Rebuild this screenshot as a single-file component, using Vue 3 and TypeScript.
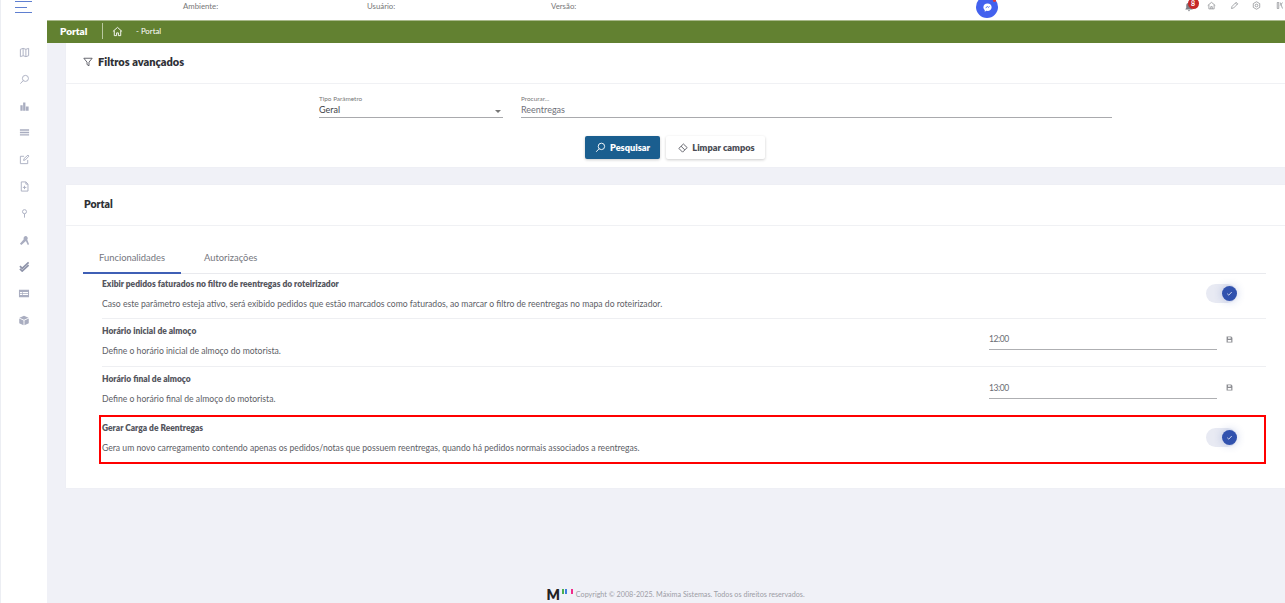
<script setup lang="ts">
const topLabels = ['Ambiente:', 'Usuário:', 'Versão:']
</script>

<template>
  <div class="shell">
    <aside class="side">
      <div class="burger"><i></i><i class="short"></i><i></i></div>
      <nav class="side-icons">
        <svg viewBox="0 0 12 12"><path d="M1.500 2.500 4.500 1.500 7.500 2.500 10.500 1.500V9.500L7.500 10.500 4.500 9.500 1.500 10.500ZM4.500 1.500V9.500M7.500 2.500V10.500" /></svg>
        <svg viewBox="0 0 12 12"><circle cx="7" cy="4.800" r="3.300" /><path d="M4.600 7.200 1.500 10.500" /></svg>
        <svg viewBox="0 0 12 12" class="solid"><path d="M1.500 4.500H4V10.500H1.500ZM4.500 1.500H7V10.500H4.500ZM7.500 6H10.500V10.500H7.500Z" /></svg>
        <svg viewBox="0 0 12 12" class="solid"><path d="M1 2.500H11V4H1ZM1 5.200H11V6.700H1ZM1 7.900H11V9.400H1Z" /></svg>
        <svg viewBox="0 0 12 12"><path d="M9.500 6.500V10.500H1.500V2.500H5.500M5 7 5.500 5 9.800 1.200 10.900 2.300 6.800 6.500Z" /></svg>
        <svg viewBox="0 0 12 12"><path d="M2.500 1H7.500L9.800 3.400V11H2.500ZM7.500 1V3.400H9.800M4.200 7H8M6 5.200V8.800" /></svg>
        <svg viewBox="0 0 12 12"><circle cx="6" cy="4" r="2.200" /><path d="M6 6.200V10.500" /></svg>
        <svg viewBox="0 0 12 12" class="solid"><path d="M7 1a2.600 2.600 0 0 1 2 4.200L11 10l-1.400 1L7.500 6.500 2.600 11 1 9.500 5.200 4.600A2.600 2.600 0 0 1 7 1Z" /></svg>
        <svg viewBox="0 0 12 12" class="check"><path d="M1 5.500 3.500 8 10.500 1.500M1 8.500 3.500 11 10.500 4.500" /></svg>
        <svg viewBox="0 0 12 12" class="solid wide"><path d="M.5 2H11.500V10H.5ZM1.600 4.300V5.500H4V4.300ZM4.700 4.300V5.500H10.400V4.300ZM1.600 6.300V7.500H4V6.300ZM4.700 6.300V7.500H10.400V6.300Z" fill-rule="evenodd" /></svg>
        <svg viewBox="0 0 12 12" class="solid wide"><path d="M6 .8 11 3 6 5.200 1 3ZM.8 3.800 5.500 6V11.200L.8 9ZM11.200 3.800 6.500 6V11.200L11.200 9Z" /></svg>
      </nav>
    </aside>

    <div class="main">
      <header class="top">
        <div class="top-labels">
          <span v-for="label in topLabels" :key="label">{{ label }}</span>
        </div>
        <div class="chat">
          <svg viewBox="0 0 12 12" width="11" height="11"><path d="M6 1.500C3.300 1.500 1.500 3.300 1.500 5.600c0 1.300.6 2.300 1.500 3V10.500l1.700-.9c2.900.7 5.800-1 5.800-4C10.500 3.300 8.700 1.500 6 1.500Z" fill="#fff" /><path d="M4 6.300 6 5l1 .8L8.200 4.900" fill="none" stroke="#4361ee" stroke-width="1" /></svg>
          <i class="chat-dot"></i>
        </div>
        <div class="top-actions">
          <span class="bell">
            <svg viewBox="0 0 12 12" width="10" height="10"><path d="M6 1a3.300 3.300 0 0 0-3.300 3.300V7L1.500 9h9L9.300 7V4.300A3.300 3.300 0 0 0 6 1ZM4.800 10h2.400A1.200 1.200 0 0 1 4.800 10Z" fill="#7d7f86" /></svg>
            <b>8</b>
          </span>
          <svg class="tool" viewBox="0 0 12 12"><path d="M1 6 6 1.800 11 6M2.500 5.200V10.500H9.500V5.200M5 10.500V7.500H7V10.500" /></svg>
          <svg class="tool" viewBox="0 0 12 12"><path d="M2 10 2.700 7.200 8.200 1.700 10.300 3.800 4.800 9.300ZM7.200 2.700 9.300 4.800" /></svg>
          <svg class="tool" viewBox="0 0 12 12"><circle cx="6" cy="6" r="1.800" /><path d="M6 1 10.300 3.500V8.500L6 11 1.700 8.500V3.500Z" /></svg>
          <svg class="tool" viewBox="0 0 12 12"><path d="M3 2V10H5V2ZM7 2 10 10M10 2 7 6" /></svg>
        </div>
      </header>

      <div class="crumb">
        <strong>Portal</strong>
        <span class="crumb-sep"></span>
        <svg viewBox="0 0 12 12" width="11" height="11"><path d="M1 6 6 1.500 11 6M2.500 5V10.500H5V7.500H7V10.500H9.500V5" /></svg>
        <span class="crumb-page">- Portal</span>
      </div>

      <div class="content">
        <section class="card filters">
          <div class="filters-head">
            <svg viewBox="0 0 12 12" width="10" height="10"><path d="M1 1.500H11L7.200 6.200V10.500L4.800 9V6.200Z" /></svg>
            <h2>Filtros avançados</h2>
          </div>
          <div class="filters-body">
            <div class="fields">
              <label class="field type">
                <small>Tipo Parâmetro</small>
                <span class="value dark">Geral<i class="caret"></i></span>
              </label>
              <label class="field search">
                <small>Procurar...</small>
                <span class="value">Reentregas</span>
              </label>
            </div>
            <div class="buttons">
              <button class="btn primary">
                <svg viewBox="0 0 12 12" width="11" height="11"><circle cx="7" cy="4.800" r="3.500" /><path d="M4.500 7.300 1.300 10.700" /></svg>
                Pesquisar
              </button>
              <button class="btn plain">
                <svg viewBox="0 0 12 12" width="10" height="10"><path d="M6.500 1.200 11 5.500 5.500 11 1 6.500ZM3.700 3.900 8.200 8.300" /></svg>
                Limpar campos
              </button>
            </div>
          </div>
        </section>

        <section class="card portal">
          <h2 class="portal-title">Portal</h2>
          <div class="portal-body">
            <div class="tabs">
              <span class="tab active">Funcionalidades</span>
              <span class="tab">Autorizações</span>
            </div>

            <div class="row first">
              <div class="row-text">
                <h3>Exibir pedidos faturados no filtro de reentregas do roteirizador</h3>
                <p>Caso este parâmetro esteja ativo, será exibido pedidos que estão marcados como faturados, ao marcar o filtro de reentregas no mapa do roteirizador.</p>
              </div>
              <span class="switch"><i><svg viewBox="0 0 12 12" width="9" height="9"><path d="M3 6.300 5 8.200 9 4" /></svg></i></span>
            </div>

            <div class="row time">
              <div class="row-text">
                <h3>Horário inicial de almoço</h3>
                <p>Define o horário inicial de almoço do motorista.</p>
              </div>
              <span class="time-input">12:00</span>
              <svg class="save" viewBox="0 0 12 12"><path d="M1 1H9L11 3V11H1ZM3.500 2V4.500H8V2ZM3 7V10H9V7Z" fill-rule="evenodd" /></svg>
            </div>

            <div class="row time late">
              <div class="row-text">
                <h3>Horário final de almoço</h3>
                <p>Define o horário final de almoço do motorista.</p>
              </div>
              <span class="time-input">13:00</span>
              <svg class="save" viewBox="0 0 12 12"><path d="M1 1H9L11 3V11H1ZM3.500 2V4.500H8V2ZM3 7V10H9V7Z" fill-rule="evenodd" /></svg>
            </div>

            <div class="row marked">
              <div class="row-text">
                <h3>Gerar Carga de Reentregas</h3>
                <p>Gera um novo carregamento contendo apenas os pedidos/notas que possuem reentregas, quando há pedidos normais associados a reentregas.</p>
              </div>
              <span class="switch"><i><svg viewBox="0 0 12 12" width="9" height="9"><path d="M3 6.300 5 8.200 9 4" /></svg></i></span>
            </div>
          </div>
        </section>

        <footer class="foot">
          <span class="logo">M<i class="b1"></i><i class="b2"></i><i class="b3"></i></span>
          <span>Copyright © 2008-2025. Máxima Sistemas. Todos os direitos reservados.</span>
        </footer>
      </div>
    </div>
  </div>
</template>

<style>
html, body { margin: 0; background: #f0f1f7; overflow: hidden; }
</style>

<style scoped>
* { box-sizing: border-box; }
.shell { display: flex; width: 1285px; height: 603px; overflow: hidden; background: #f0f1f7; font-family: "Lato", "Noto Sans", sans-serif; color: #4b4c55; }
.side { width: 47px; flex: none; background: #fff; border-left: 1px solid #eceef3; display: flex; flex-direction: column; }
.burger { display: flex; flex-direction: column; gap: 4.500px; padding: 1px 0 0 14px; height: 20px; }
.burger i { display: block; width: 17px; height: 1px; background: #5f7fd0; }
.burger i.short { width: 12px; }
.side-icons { margin-top: 27px; display: flex; flex-direction: column; align-items: center; gap: 15.800px; }
.side-icons svg { width: 11px; height: 11px; flex: none; fill: none; stroke: #a9adc0; stroke-width: 1; }
.side-icons svg.solid { fill: #a9adc0; stroke: none; }
.side-icons svg.check { stroke: #8f94aa; stroke-width: 1.800; }
.side-icons svg.wide { width: 12px; height: 11px; }
.main { flex: 1; min-width: 0; display: flex; flex-direction: column; }
.top { height: 20px; background: #fff; display: flex; align-items: flex-start; position: relative; flex: none; }
.top-labels { display: flex; font-size: 7.800px; color: #777; padding: 1px 0 0 136px; }
.top-labels span { width: 184px; }
.chat { position: absolute; left: 929px; top: -4px; width: 22px; height: 22px; border-radius: 50%; background: #4361ee; display: flex; align-items: center; justify-content: center; }
.chat-dot { position: absolute; right: 2px; top: 3px; width: 3px; height: 3px; border-radius: 50%; background: #e53935; }
.top-actions { position: absolute; right: 1.500px; top: 0; display: flex; align-items: center; gap: 13.500px; height: 11px; }
.bell { position: relative; display: flex; margin-top: 2px; }
.bell b { position: absolute; left: 4px; top: -4px; width: 11px; height: 11px; border-radius: 50%; background: #c62828; color: #fff; font-size: 7px; line-height: 11px; text-align: center; }
.tool { width: 9px; height: 9px; fill: none; stroke: #8b8d92; stroke-width: 1; }
.crumb { height: 23px; flex: none; background: #628131; border-top: 1px solid #a9b98c; color: #fff; display: flex; align-items: center; padding: 0 0 2px 13px; }
.crumb strong { font-size: 10px; font-weight: 800; width: 42px; }
.crumb-sep { width: 1px; height: 16px; background: #b9c8a0; margin-right: 9px; }
.crumb svg { fill: none; stroke: #fff; stroke-width: 1; margin-right: 13px; }
.crumb-page { font-size: 7.800px; }
.content { flex: 1; padding-left: 19px; display: flex; flex-direction: column; min-height: 0; }
.card { background: #fff; box-shadow: 0 0 1px rgba(80, 85, 120, .08); }
.filters { height: 124px; flex: none; }
.filters-head { height: 41px; padding: 12px 0 0 17px; border-bottom: 1px solid #f0f1f4; display: flex; align-items: flex-start; gap: 5px; }
.filters-head svg { fill: none; stroke: #4b4c55; stroke-width: 1; margin-top: 2px; }
h2 { margin: 0; font-size: 11px; font-weight: 800; color: #2f3036; }
.filters-body { padding-top: 10px; }
.fields { display: flex; padding-left: 253px; gap: 18px; }
.field { display: flex; flex-direction: column; height: 24px; border-bottom: 1px solid #a9aaad; }
.field small { font-size: 6.400px; line-height: 9px; color: #777; }
.field.type { width: 184px; }
.field.search { width: 591px; }
.value { font-size: 9px; line-height: 13px; color: #70717a; display: flex; justify-content: space-between; align-items: center; }
.value.dark { color: #3e3f47; }
.caret { width: 0; height: 0; border: 3px solid transparent; border-top: 3px solid #777; border-bottom: 0; margin-right: 2px; margin-top: 3px; }
.buttons { display: flex; justify-content: center; gap: 6px; padding: 18px 0 0 0; margin-left: -2px; }
.btn { height: 23px; border: 0; border-radius: 2px; font: 800 9.200px "Lato", "Noto Sans", sans-serif; display: flex; align-items: center; justify-content: center; gap: 4px; box-shadow: 0 1px 3px rgba(0, 0, 0, .2); padding: 0 0 0 1px; }
.btn svg { fill: none; stroke-width: 1; }
.primary { width: 75px; background: #1a5e8f; color: #fff; }
.primary svg { stroke: #fff; }
.plain { width: 99px; background: #fff; color: #4b4c55; padding-left: 3px; }
.plain svg { stroke: #4b4c55; }
.portal { margin-top: 18px; height: 303px; flex: none; padding-right: 19px; }
.portal-title { height: 41px; padding: 13px 0 0 18px; margin-right: -19px; border-bottom: 1px solid #f0f1f4; font-size: 10.500px; }
.portal-body { padding: 19px 0 0 17px; }
.tabs { display: flex; height: 29px; border-bottom: 1px solid #e9eaee; }
.tab { font-size: 9.400px; color: #75767e; padding: 7px 16px 0; height: 29px; }
.tab + .tab { padding-left: 23px; }
.tab.active { width: 98px; border-bottom: 2px solid #3f5fb5; }
.row { display: flex; align-items: center; height: 48px; margin-left: 19px; border-bottom: 1px solid #eeeff2; }
.row.first { height: 45px; }
.row.late { height: 49px; }
.row-text { flex: 1; min-width: 0; padding-bottom: 4px; }
h3 { margin: 0; font-size: 8.450px; line-height: 12px; font-weight: 800; color: #55565e; }
p { margin: 8px 0 0; font-size: 8.640px; line-height: 12px; color: #5d5e66; }
.switch { width: 31px; height: 19px; border-radius: 10px; background: #e8eaf3; position: relative; margin: -5px 29px 0 0; }
.switch i { position: absolute; right: 0; top: 2px; width: 15px; height: 15px; border-radius: 50%; background: #3152ae; display: flex; align-items: center; justify-content: center; box-shadow: 0 0 8px rgba(60, 90, 180, .3); }
.switch svg { fill: none; stroke: #fff; stroke-width: 1; }
.time-input { width: 228px; height: 16px; border-bottom: 1px solid #aeafb2; font-size: 8.500px; letter-spacing: -.4px; line-height: 11px; color: #6b6c74; margin-top: -1px; }
.save { width: 7px; height: 7px; margin: -6px 33px 0 9px; fill: #8c8d92; }
.row.late .save { margin-top: -8px; }
.row.marked { margin-left: 17px; margin-right: 1px; height: 47px; padding-left: 2px; outline: 2px solid #f00; outline-offset: -1px; border: 0; }
.row.marked .row-text { padding-bottom: 4px; }
.row.marked .switch { margin-right: 28px; margin-top: -5px; }
.foot { margin-top: 101px; display: flex; justify-content: center; align-items: center; gap: 3px; font-size: 7.200px; color: #9c9da6; margin-right: 0; }
.logo { display: inline-flex; align-items: flex-start; font: 800 14px/11px "Lato", sans-serif; color: #222; gap: 1px; height: 11px; }
.logo i { width: 2px; height: 5px; display: block; }
.b1 { background: #4caf50; margin-left: 1px; }
.b2 { background: #3f7fe0; }
.b3 { background: #ef2d8c; margin-left: 3px; }
</style>
